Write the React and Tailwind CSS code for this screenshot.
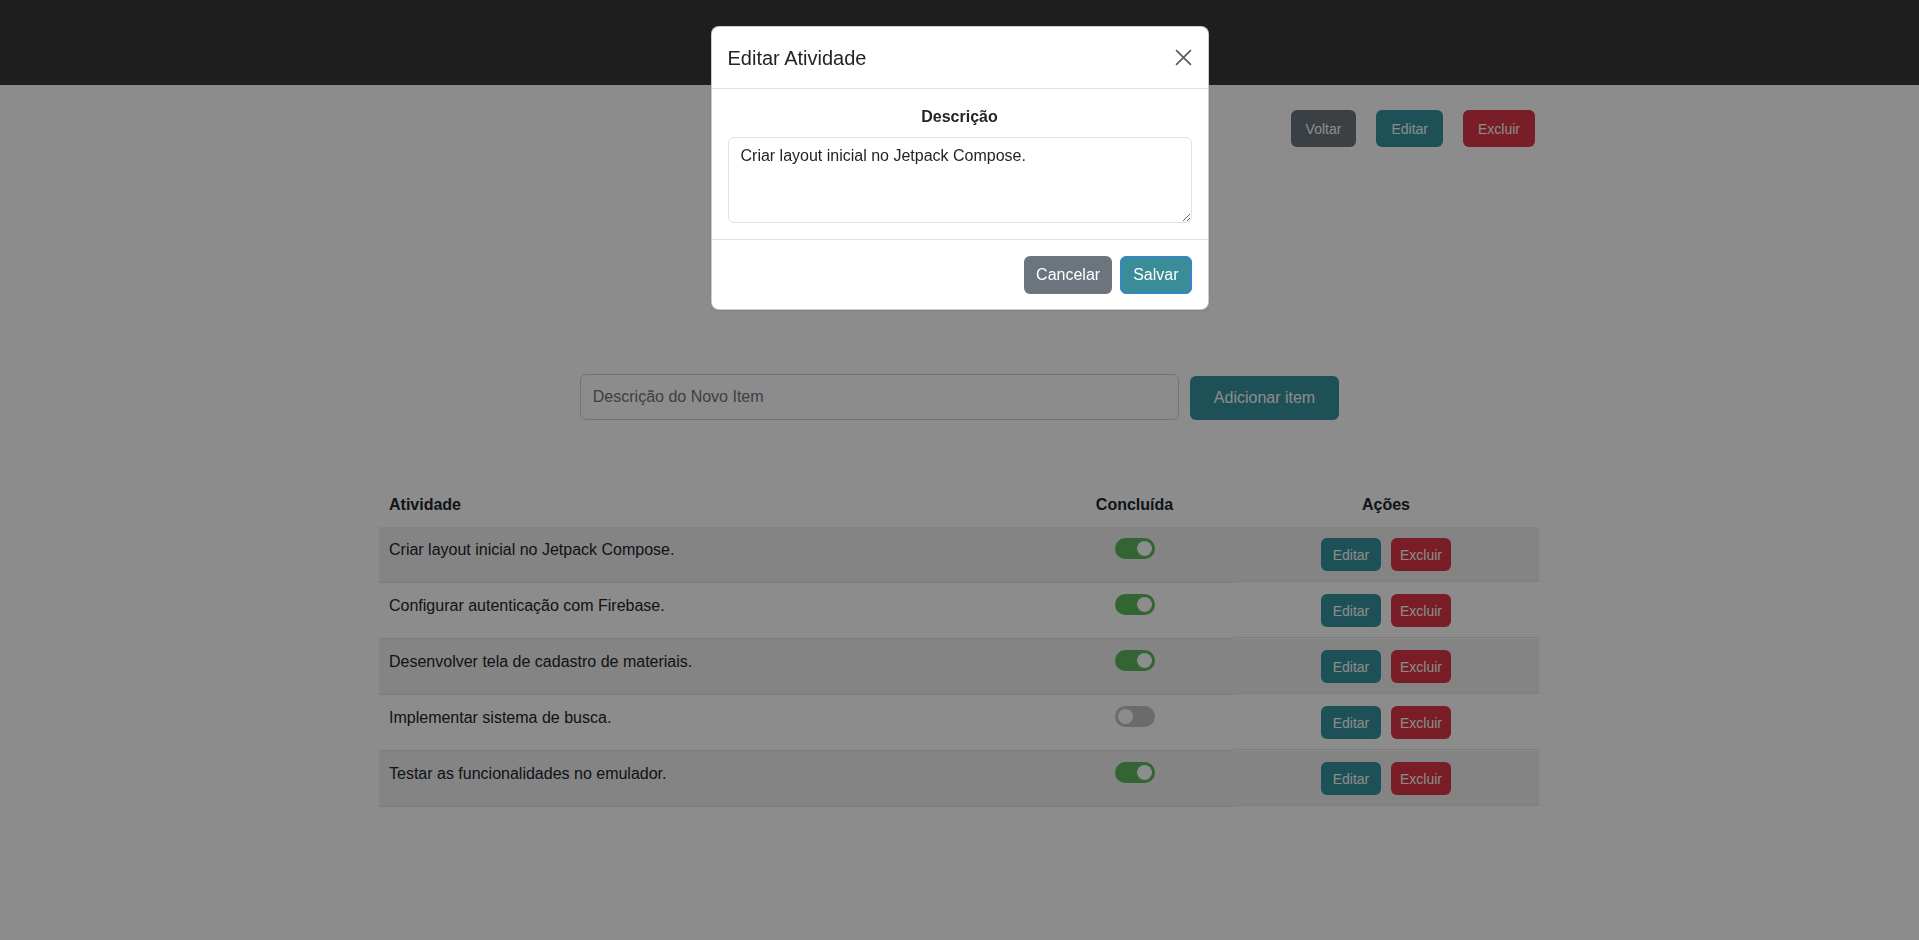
import React from 'react';

const tarefas = [
  { texto: 'Criar layout inicial no Jetpack Compose.', feita: true },
  { texto: 'Configurar autenticação com Firebase.', feita: true },
  { texto: 'Desenvolver tela de cadastro de materiais.', feita: true },
  { texto: 'Implementar sistema de busca.', feita: false },
  { texto: 'Testar as funcionalidades no emulador.', feita: true },
];

function Switch({ on }) {
  return (
    <span
      className={`inline-flex h-[21px] w-[40px] items-center rounded-full ${
        on ? 'bg-[#5cb85c]' : 'bg-[#c4c4c4]'
      }`}
    >
      <span className={`h-[15px] w-[15px] rounded-full bg-white ${on ? 'ml-[22px]' : 'ml-[3px]'}`} />
    </span>
  );
}

export default function App() {
  return (
    <div className="min-h-screen bg-white font-['Liberation_Sans',Arial,sans-serif] text-[#212529]">
      <header className="h-[85px] bg-[#373737]" />

      <main className="mx-auto w-[1161px]">
        {/* botões do topo */}
        <div className="flex justify-end gap-5 pr-[5px] pt-[25px]">
          <button className="h-[37px] rounded-md bg-[#6c757d] px-[15px] text-sm text-white">Voltar</button>
          <button className="h-[37px] rounded-md bg-[#37939e] px-[15px] text-sm text-white">Editar</button>
          <button className="h-[37px] rounded-md bg-[#dc3545] px-[15px] text-sm text-white">Excluir</button>
        </div>

        {/* novo item */}
        <div className="mt-[227px] flex items-end justify-center gap-[11px]">
          <input
            className="h-[46px] w-[599px] rounded-md border border-[#ced4da] bg-white px-3 text-base placeholder:text-[#6c757d]"
            placeholder="Descrição do Novo Item"
          />
          <button className="h-[44px] rounded-md bg-[#37939e] px-6 text-base text-white">Adicionar item</button>
        </div>

        {/* tabela */}
        <div className="mt-[66px] w-[1160px]">
          <div className="grid h-[41px] grid-cols-[657px_197px_306px] pt-[7px] font-bold leading-6">
            <div className="pl-[10px]">Atividade</div>
            <div className="text-center">Concluída</div>
            <div className="text-center">Ações</div>
          </div>
          {tarefas.map((t, i) => (
            <div key={i} className="flex items-start">
              <div
                className={`grid h-[56px] w-[854px] grid-cols-[657px_197px] border-b border-[#e4e4e4] ${
                  i % 2 === 0 ? 'bg-[#f1f1f1]' : 'bg-white'
                }`}
              >
                <div className="pl-[10px] pt-[11px] leading-6">{t.texto}</div>
                <div className="flex justify-center pt-[11px]">
                  <Switch on={t.feita} />
                </div>
              </div>
              <div
                className={`flex h-[55px] w-[306px] justify-center gap-[10px] border-b border-[#e4e4e4] pt-[11px] ${
                  i % 2 === 0 ? 'bg-[#f1f1f1]' : 'bg-white'
                }`}
              >
                <button className="h-[33px] w-[60px] rounded-md bg-[#37939e] text-sm text-white">Editar</button>
                <button className="h-[33px] w-[60px] rounded-md bg-[#dc3545] text-sm text-white">Excluir</button>
              </div>
            </div>
          ))}
        </div>
      </main>

      {/* fundo escurecido do modal */}
      <div className="fixed inset-0 bg-black/45" />

      {/* modal */}
      <div className="fixed inset-0 flex items-start justify-center pt-[26px]">
        <div className="w-[498px] rounded-lg border border-black/20 bg-white shadow-sm">
          <div className="flex h-[62px] items-center justify-between border-b border-[#dee2e6] px-4">
            <h5 className="text-xl leading-[30px]">Editar Atividade</h5>
            <svg width="17" height="17" viewBox="0 0 16 16" fill="none" stroke="#5c5c5c" strokeWidth="1.6">
              <path d="M1 1L15 15M15 1L1 15" />
            </svg>
          </div>
          <div className="px-4 pb-4 pt-4">
            <label className="mb-2 block text-center font-bold leading-6">Descrição</label>
            <textarea
              className="block h-[86px] w-full rounded-md border border-[#dee2e6] px-3 py-1.5 text-base leading-6 text-[#212529]"
              defaultValue="Criar layout inicial no Jetpack Compose."
            />
          </div>
          <div className="flex justify-end gap-2 border-t border-[#dee2e6] px-4 pb-[15px] pt-4">
            <button className="h-[38px] rounded-md bg-[#6c757d] px-3 text-base text-white">Cancelar</button>
            <button className="h-[38px] rounded-md border border-[#2f7ff0] bg-[#3a8c96] px-3 text-base text-white">
              Salvar
            </button>
          </div>
        </div>
      </div>
    </div>
  );
}
